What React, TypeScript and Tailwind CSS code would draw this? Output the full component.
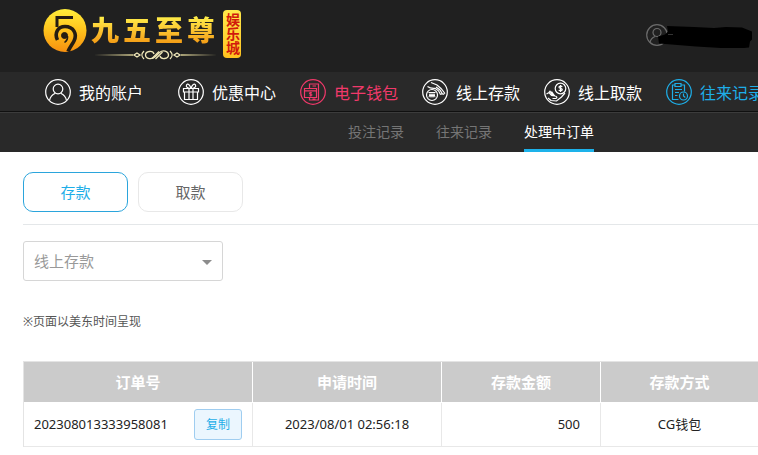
import React, { useState } from 'react';

interface NavItem {
  label: string;
  color: string;
  icon: React.ReactNode;
}

interface OrderProps {
  id: string;
  time: string;
  amount: string;
  method: string;
}

const navItems: NavItem[] = [
  {
    label: '我的账户',
    color: 'text-white',
    icon: (
      <>
        <circle cx="13" cy="10" r="4.8" />
        <path d="M4.5 21.5c.8-4 3-6 5.8-7.2M21.5 21.5c-.8-4-3-6-5.8-7.2" />
      </>
    ),
  },
  {
    label: '优惠中心',
    color: 'text-white',
    icon: (
      <>
        <path d="M5.5 9.5h15V13h-15zM6.5 13v7.5h13V13M11 9.5v11M15 9.5v11" />
        <path d="M13 9.5C10 9.5 7.5 8 8.5 6s3.5-.5 4.5 3.5c1-4 3.5-5.5 4.5-3.5s-1.5 3.5-4.5 3.5z" />
      </>
    ),
  },
  {
    label: '电子钱包',
    color: 'text-[#f0396a]',
    icon: (
      <>
        <path d="M9.5 9V5h9v16h-9v-2.5M12.5 7H16M12.5 20h3" />
        <path d="M4.5 9.5h12v9h-12zM4.5 11.8h12" />
        <path
          d="M11.8 13.6H9.6v1.5h2.2v1.6H9.4M10.7 12.8v4.7"
          strokeWidth="1"
        />
      </>
    ),
  },
  {
    label: '线上存款',
    color: 'text-white',
    icon: (
      <>
        <circle cx="10" cy="16" r="5.5" />
        <path
          d="M6.5 13.5h7M7 18.3l1-3.6 1 3.6 1-3.6 1 3.6 1-3.6 1 3.6"
          strokeWidth="1"
        />
        <path d="M5.5 7.5c2 1.5 5 2 7.500 1.800l3.500 2.500 2 3.700M9 3.500l6 2.500 4 3.500 4 5M14 8l4 3 2.800 4.500M18.500 15.500l1.300-.8M20.800 15.500l1.700-1" />
      </>
    ),
  },
  {
    label: '线上取款',
    color: 'text-white',
    icon: (
      <>
        <circle cx="16.5" cy="9.5" r="5.3" />
        <path d="M18.3 7.8c-1-1-3.3-.8-3.3.5s3.3.9 3.3 2.3-2.5 1.5-3.5.4M16.6 6v7" />
        <path d="M2.5 15L5 13.500l2.500 3 3.500.5c2 .2 2.500 2 .8 2.300l-3.300.2M4 19l3 2.500 5.500.5 5-4 3.500-4M5 13.500l1-1.200 3 4M7.500 12.500l3 4.300" />
      </>
    ),
  },
  {
    label: '往来记录',
    color: 'text-[#1eaee8]',
    icon: (
      <>
        <path d="M12.5 20.5h-6V6H9M15 6h3.5v6.5M9 4.5h6v3H9z" />
        <path d="M9 10.5h7M9 13.5h4M9 16.5h2.5" />
        <circle cx="17.5" cy="17" r="4" />
        <path d="M17.5 14.5V17l1.8 1.5" />
      </>
    ),
  },
];

const subNavItems = ['投注记录', '往来记录', '处理中订单'];

const tabs = ['存款', '取款'];

const orders: OrderProps[] = [
  {
    id: '202308013333958081',
    time: '2023/08/01 02:56:18',
    amount: '500',
    method: 'CG钱包',
  },
];

const Logo = () => (
  <a href="#" aria-label="九五至尊娱乐城" className="flex items-start">
    <svg width="44" height="44" viewBox="0 0 44 44" className="mt-2">
      <defs>
        <linearGradient id="gold" x1="0" y1="0" x2="0" y2="1">
          <stop offset="0" stopColor="#ffee3a" />
          <stop offset="0.5" stopColor="#ffc21c" />
          <stop offset="1" stopColor="#f7900f" />
        </linearGradient>
      </defs>
      <circle cx="22" cy="22.5" r="21.5" fill="url(#gold)" />
      <g fill="none" stroke="#241c12">
        <path d="M30 9.5H14V19" strokeWidth="3" />
        <path
          d="M14.500 32C11 25 15 18.500 22 18.500c8.500 0 12.500 7.500 9 14.500-1.500 3-4 6-6 10.500"
          strokeWidth="3.600"
        />
        <circle cx="21.500" cy="27.500" r="3" fill="#241c12" strokeWidth="1" />
        <path d="M24.500 28c.5 3-1 5-3 6.500" strokeWidth="1.500" />
      </g>
    </svg>
    <div className="ml-1 mt-4">
      <div className="flex gap-1 text-[28px] font-black leading-7">
        {['九', '五', '至', '尊'].map((char) => (
          <span
            key={char}
            className="bg-linear-to-b from-[#fff04a] to-[#f39a12] bg-clip-text text-transparent"
          >
            {char}
          </span>
        ))}
      </div>
      <svg width="126" height="14" viewBox="0 0 126 14" className="mt-1">
        <path d="M3 7l39-.8v1.600zM126 7l-36-.8v1.600z" fill="#d9cf96" />
        <g fill="none" stroke="#efe7b8" strokeWidth="1.300">
          <path d="M49 7l-3-2-3 2 3 2zM83 7l3-2 3 2-3 2z" />
          <path d="M53 3c-3 3-3 5 0 8M79 3c3 3 3 5 0 8" />
          <path d="M63 6c-1-4-8.500-3-8.500 1s6.500 5 10 1.500l4-4c3.500-3 9-1.500 9 2.500s-7.500 5-8.500 1" />
          <path d="M61 10.500l7-7M64.500 11l7-7" />
        </g>
      </svg>
    </div>
    <div className="ml-1.5 mt-[10px] flex h-12 w-[18px] items-center justify-center rounded-[4px] bg-linear-to-b from-[#ffe94a] to-[#ffc21e] text-[14px] font-bold leading-[18px] text-[#d11a0c] [writing-mode:vertical-rl]">
      娱乐城
    </div>
  </a>
);

const MemberInfo = () => (
  <svg width="108" height="26" viewBox="0 0 108 26">
    <g fill="none" stroke="#6b6b6b" strokeWidth="1.200">
      <circle cx="11" cy="12" r="10.300" />
      <circle cx="11" cy="9.500" r="4" />
      <path d="M4 19.500c.5-3 2.500-5 5-6M18 19.500c-.5-3-2-5-4.500-6" />
    </g>
    <path
      d="M21 3L48 4l20 1 12-1 16 .5 5 2 5 2v8l-2 2-1 6-5 .5H75l-25-1.500-37-3-1-7 7-2 3-3z"
      fill="#000"
    />
    <path d="M22 11.500h5" stroke="#333" />
  </svg>
);

const App = () => {
  const [activeTab, setActiveTab] = useState<string>('存款');
  const [activeSub, setActiveSub] = useState<string>('处理中订单');

  const handleCopy = (id: string) => {
    navigator.clipboard?.writeText(id);
  };

  return (
    <div className="min-h-screen overflow-hidden bg-white font-['Noto_Sans','Noto_Sans_CJK_SC',sans-serif]">
      <header className="flex h-[72px] items-start justify-between bg-[#202020] pl-[43px] pr-1">
        <Logo />
        <div className="mt-[23px]">
          <MemberInfo />
        </div>
      </header>

      <nav className="flex h-10 items-center gap-6 overflow-hidden border-b border-[#101010] bg-[#292929] pl-[45px]">
        {navItems.map((item) => (
          <a
            key={item.label}
            href="#"
            className={`flex shrink-0 items-center gap-2 whitespace-nowrap text-base first:mr-[11px] ${item.color}`}
          >
            <svg
              width="26"
              height="26"
              viewBox="0 0 26 26"
              fill="none"
              stroke="currentColor"
              strokeWidth="1.200"
            >
              <circle cx="13" cy="13" r="12.300" />
              {item.icon}
            </svg>
            <span className="pt-0.5">{item.label}</span>
          </a>
        ))}
      </nav>

      <nav className="flex h-10 gap-8 border-t border-[#3c3c3c] bg-[#292929] pl-[348px] text-sm">
        {subNavItems.map((label) => (
          <a
            key={label}
            href="#"
            onClick={() => setActiveSub(label)}
            className={`flex items-center whitespace-nowrap border-b-3 pt-px ${
              label === activeSub
                ? 'border-[#1db2ea] text-white'
                : 'border-transparent text-[#757575]'
            }`}
          >
            {label}
          </a>
        ))}
      </nav>

      <main className="pl-[23px] pt-5">
        <div className="flex gap-[10px] border-b border-[#e4e7e9] pb-3">
          {tabs.map((tab) => (
            <button
              key={tab}
              type="button"
              onClick={() => setActiveTab(tab)}
              className={`h-10 w-[105px] rounded-[10px] border text-[15px] ${
                tab === activeTab
                  ? 'border-[#2ba5dc] text-[#1eaee8]'
                  : 'border-[#e8e8e8] text-[#666]'
              }`}
            >
              {tab}
            </button>
          ))}
        </div>

        <div className="relative mt-4 w-[200px]">
          <select
            aria-label="订单类型"
            className="h-10 w-full appearance-none rounded-[3px] border border-[#d6d6d6] bg-white px-[10px] text-[15px] text-[#999]"
          >
            <option>线上存款</option>
          </select>
          <svg
            width="10"
            height="5"
            viewBox="0 0 10 5"
            className="pointer-events-none absolute right-[11px] top-[19px]"
          >
            <path d="M0 0h10L5 5z" fill="#8c8c8c" />
          </svg>
        </div>

        <p className="mt-8 text-xs leading-[18px] text-[#555]">
          ※页面以美东时间呈现
        </p>

        <table className="mt-[30px] w-full table-fixed border-separate border-spacing-0 border-l border-t border-[#e4e4e4] text-[13px] text-[#222]">
          <colgroup>
            <col className="w-[229px]" />
            <col className="w-[189px]" />
            <col className="w-[159px]" />
            <col />
          </colgroup>
          <thead>
            <tr className="h-[41px] bg-[#cbcbcb] text-[15px] text-white">
              {['订单号', '申请时间', '存款金额', '存款方式'].map((title) => (
                <th
                  key={title}
                  className="border-b border-r border-white font-bold last:border-r-0"
                >
                  {title}
                </th>
              ))}
            </tr>
          </thead>
          <tbody>
            {orders.map((order) => (
              <tr
                key={order.id}
                className="h-11 *:border-b *:border-r *:border-[#e8e8e8] *:last:border-r-0"
              >
                <td className="px-[10px]">
                  <div className="flex items-center justify-between">
                    {order.id}
                    <button
                      type="button"
                      onClick={() => handleCopy(order.id)}
                      className="h-[31px] w-12 rounded-[3px] border border-[#9fcdf0] bg-[#ebf6fe] text-xs text-[#1eaee8]"
                    >
                      复制
                    </button>
                  </div>
                </td>
                <td className="text-center">{order.time}</td>
                <td className="pr-5 text-right">{order.amount}</td>
                <td className="text-center">{order.method}</td>
              </tr>
            ))}
          </tbody>
        </table>
      </main>
    </div>
  );
};

export default App;
